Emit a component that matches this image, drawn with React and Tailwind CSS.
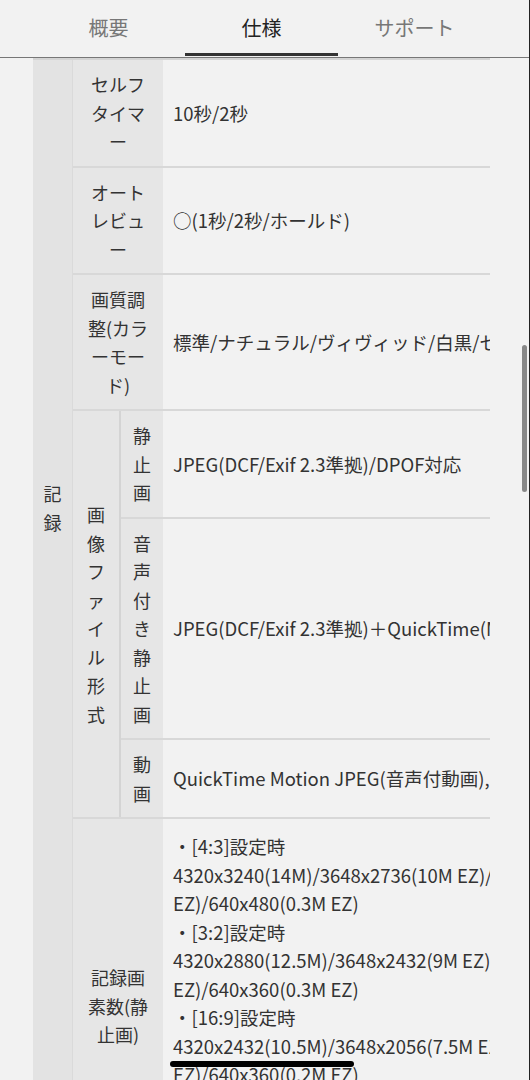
import React from "react";

const tabs = ["概要", "仕様", "サポート"];

// 左の見出しは行ごとに指定して折り返しを固定する
const Row = ({ label, lines, last, pad = "py-[10px]" }) => (
  <div className={`flex ${last ? "" : "border-b-2 border-[#d8d8d8]"}`}>
    <div className="w-[90px] shrink-0 bg-[#e6e6e6] py-[10px] flex flex-col items-center justify-center text-center">
      {label.map((l, i) => (
        <div key={i}>{l}</div>
      ))}
    </div>
    <div className={`flex-1 pl-[10px] ${pad} flex flex-col justify-center whitespace-nowrap text-[18.5px]`}>
      {lines.map((l, i) => (
        <div key={i}>{l}</div>
      ))}
    </div>
  </div>
);

const SubRow = ({ label, text, last }) => (
  <div className={`flex ${last ? "" : "border-b-2 border-[#d8d8d8]"}`}>
    <div className="w-[42px] shrink-0 bg-[#e6e6e6] py-[10px] flex flex-col items-center justify-center">
      {label.split("").map((c, i) => (
        <div key={i}>{c}</div>
      ))}
    </div>
    <div className="flex-1 pl-[10px] py-[10px] flex items-center whitespace-nowrap text-[18.5px]">{text}</div>
  </div>
);

export default function App() {
  return (
    <div className="relative w-[530px] h-[1080px] overflow-hidden bg-[#f2f2f2] border-r border-[#222] text-[#333] text-[18px] leading-[28.5px] font-['Noto_Sans_CJK_JP','Noto_Sans',sans-serif]">
      {/* TABS */}
      <div className="flex h-[58px] pl-[32px] border-b border-[#777]">
        {tabs.map((t, i) => (
          <div
            key={t}
            className={`relative w-[153px] flex items-center justify-center text-[20px] ${i === 1 ? "text-[#222]" : "text-[#777]"}`}
          >
            {t}
            {i === 1 && <span className="absolute left-0 right-0 bottom-[1px] h-[3px] bg-[#333]"></span>}
          </div>
        ))}
      </div>

      {/* SPEC TABLE */}
      <div className="ml-[33px] w-[457px] overflow-hidden border-t-2 border-[#d4d4d4]">
        <div className="flex">
          <div className="w-[40px] shrink-0 bg-[#e3e3e3] border-r border-[#dadada] pt-[419px] text-center">
            <div>記</div>
            <div>録</div>
          </div>

          <div className="flex-1 min-w-0 flex flex-col">
            <Row label={["セルフ", "タイマ", "ー"]} lines={["10秒/2秒"]} />
            <Row label={["オート", "レビュ", "ー"]} lines={["○(1秒/2秒/ホールド)"]} />
            <Row
              label={["画質調", "整(カラ", "ーモー", "ド)"]}
              lines={["標準/ナチュラル/ヴィヴィッド/白黒/セピア"]}
            />

            {/* 画像ファイル形式 */}
            <div className="flex border-b-2 border-[#d8d8d8]">
              <div className="w-[48px] shrink-0 bg-[#e6e6e6] border-r-2 border-[#d4d4d4] flex flex-col items-center justify-center">
                {"画像ファイル形式".split("").map((c, i) => (
                  <div key={i}>{c}</div>
                ))}
              </div>
              <div className="flex-1 min-w-0 flex flex-col">
                <SubRow label="静止画" text="JPEG(DCF/Exif 2.3準拠)/DPOF対応" />
                <SubRow label="音声付き静止画" text="JPEG(DCF/Exif 2.3準拠)＋QuickTime(Motion JPEG)" />
                <SubRow label="動画" text="QuickTime Motion JPEG(音声付動画), AVI" last />
              </div>
            </div>

            <Row
              label={["記録画", "素数(静", "止画)"]}
              last
              pad="pt-[13px] pb-[19px]"
              lines={[
                "・[4:3]設定時",
                "4320x3240(14M)/3648x2736(10M EZ)/2560x1920(5M",
                "EZ)/640x480(0.3M EZ)",
                "・[3:2]設定時",
                "4320x2880(12.5M)/3648x2432(9M EZ)/2560x1712(4.5M",
                "EZ)/640x360(0.3M EZ)",
                "・[16:9]設定時",
                <span key="bar" className="relative">
                  4320x2432(10.5M)/3648x2056(7.5M EZ)/2560x1440(3.5M
                  <span className="absolute left-[-3px] top-[28px] w-[184px] h-[6px] rounded-full bg-black"></span>
                </span>,
                "EZ)/640x360(0.2M EZ)",
                "・[1:1]設定時",
                "3232x3232(10.5M)/2736x2736(7.5M EZ)/1920x1920(3.5M",
                "EZ)/480x480(0.2M EZ)",
              ]}
            />
          </div>
        </div>
      </div>

      {/* SCROLLBAR */}
      <div className="absolute left-[522px] top-[345px] w-[5px] h-[147px] rounded-full bg-[#888]"></div>
    </div>
  );
}
